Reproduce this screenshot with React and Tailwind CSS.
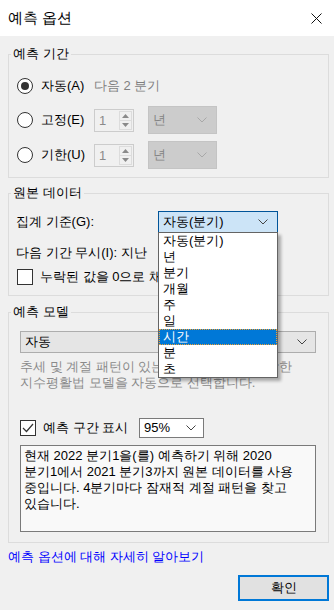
import React from "react";

const Chevron = ({ color = "#333" }) => (
  <svg width="10" height="6" viewBox="0 0 10 6" fill="none">
    <polyline points="0.5,0.5 5,5 9.5,0.5" stroke={color} strokeWidth="1" />
  </svg>
);

const Radio = ({ checked }) => (
  <span className="w-[16px] h-[16px] rounded-full border border-[#333333] bg-white flex items-center justify-center shrink-0">
    {checked && <span className="w-[8px] h-[8px] rounded-full bg-[#333333]" />}
  </span>
);

const Checkbox = ({ checked }) => (
  <span className="w-[16px] h-[16px] border border-[#333333] bg-white flex items-center justify-center shrink-0">
    {checked && (
      <svg width="12" height="10" viewBox="0 0 12 10" fill="none">
        <polyline points="1,5 4.5,8.5 11,1" stroke="#333" strokeWidth="1.2" />
      </svg>
    )}
  </span>
);

const Spinner = () => (
  <div className="w-[40px] h-[23px] border border-[#cccccc] flex">
    <span className="flex-1 pl-[4px] leading-[21px] text-[#8a8a8a]">1</span>
    <div className="w-[13px] flex flex-col my-[1px] mr-[1px]">
      <div className="flex-1 border border-[#dcdcdc] flex items-center justify-center">
        <svg width="7" height="4" viewBox="0 0 7 4"><polygon points="0,4 3.5,0 7,4" fill="#8a8a8a" /></svg>
      </div>
      <div className="flex-1 border border-[#dcdcdc] border-t-0 flex items-center justify-center">
        <svg width="7" height="4" viewBox="0 0 7 4"><polygon points="0,0 3.5,4 7,0" fill="#8a8a8a" /></svg>
      </div>
    </div>
  </div>
);

const DisabledSelect = () => (
  <div className="ml-[14px] w-[69px] h-[28px] bg-[#cccccc] border border-[#c4c4c4] flex items-center justify-between pl-[4px] pr-[9px]">
    <span className="text-[#838383]">년</span>
    <Chevron color="#a8a8a8" />
  </div>
);

const items = ["자동(분기)", "년", "분기", "개월", "주", "일", "시간", "분", "초"];

export default function App() {
  return (
    <div className="w-[334px] h-[610px] bg-[#f0f0f0] font-['Liberation_Sans',sans-serif] text-[13px] leading-[16px] text-black overflow-hidden">
      {/* title bar */}
      <div className="h-[36px] bg-white flex items-center justify-between pl-[8px] pr-[12px]">
        <span className="text-[14.5px] leading-[20px]">예측 옵션</span>
        <svg width="11" height="11" viewBox="0 0 11 11" fill="none">
          <line x1="0.5" y1="0.5" x2="10.5" y2="10.5" stroke="#111" strokeWidth="1" />
          <line x1="10.5" y1="0.5" x2="0.5" y2="10.5" stroke="#111" strokeWidth="1" />
        </svg>
      </div>

      <div className="pl-[8px] pr-[5px] pt-[10px] flex flex-col">
        {/* group 1 */}
        <fieldset className="border border-[#dcdcdc]">
          <legend className="ml-[2px] px-[2px] leading-[16px]">예측 기간</legend>
          <div className="flex flex-col pl-[8px] pt-[10px] pb-[8px]">
            <div className="h-[28px] flex items-center">
              <Radio checked />
              <span className="ml-[8px] w-[53px]">자동(A)</span>
              <span className="text-[#7f7f7f]">다음 2 분기</span>
            </div>
            <div className="h-[28px] mt-[6px] flex items-center">
              <Radio />
              <span className="ml-[8px] w-[53px]">고정(E)</span>
              <Spinner />
              <DisabledSelect />
            </div>
            <div className="h-[28px] mt-[7px] flex items-center">
              <Radio />
              <span className="ml-[8px] w-[53px]">기한(U)</span>
              <Spinner />
              <DisabledSelect />
            </div>
          </div>
        </fieldset>

        {/* group 2 */}
        <fieldset className="border border-[#dcdcdc] mt-[7px]">
          <legend className="ml-[2px] px-[2px] leading-[16px]">원본 데이터</legend>
          <div className="flex flex-col pl-[7px] pt-[10px] pb-[10px]">
            <div className="flex items-center h-[22px]">
              <span className="w-[142px]">집계 기준(G):</span>
              <div className="relative">
                <div className="w-[120px] h-[22px] bg-[#cce4f7] border border-[#005499] flex items-center justify-between pl-[4px] pr-[9px]">
                  <span>자동(분기)</span>
                  <Chevron color="#444" />
                </div>
                <div className="absolute left-0 top-[21px] z-10 w-[120px] bg-white border border-[#646464] shadow-[3px_3px_3px_rgba(0,0,0,0.3)] flex flex-col">
                  {items.map((t) =>
                    t === "시간" ? (
                      <div key={t} className="h-[16px] leading-[14px] pl-[3px] bg-[#0078d7] text-white border border-dotted border-[#f0a030]">
                        {t}
                      </div>
                    ) : (
                      <div key={t} className="h-[16px] leading-[16px] pl-[4px]">
                        {t}
                      </div>
                    )
                  )}
                </div>
              </div>
            </div>
            <div className="mt-[12px] h-[16px]">다음 기간 무시(I): 지난</div>
            <div className="mt-[8px] h-[16px] flex items-center">
              <span className="ml-[1px]"><Checkbox /></span>
              <span className="ml-[7px] whitespace-nowrap">누락된 값을 0으로 채우기</span>
            </div>
          </div>
        </fieldset>

        {/* group 3 */}
        <fieldset className="border border-[#dcdcdc] mt-[8px]">
          <legend className="ml-[2px] px-[2px] leading-[16px]">예측 모델</legend>
          <div className="flex flex-col pl-[11px] pt-[11px] pb-[10px]">
            <div className="w-[296px] h-[22px] bg-[#e5e5e5] border border-[#adadad] flex items-center justify-between pl-[4px] pr-[8px]">
              <span>자동</span>
              <Chevron color="#444" />
            </div>
            <div className="mt-[6px] text-[#8a8a8a] whitespace-nowrap">
              <div className="h-[16px]">추세 및 계절 패턴이 있는 데이터에 가장 적합한</div>
              <div className="h-[16px]">지수평활법 모델을 자동으로 선택합니다.</div>
            </div>
            <div className="mt-[27px] h-[20px] flex items-center">
              <Checkbox checked />
              <span className="ml-[7px] w-[96px]">예측 구간 표시</span>
              <div className="w-[65px] h-[20px] bg-white border border-[#7a7a7a] flex items-center justify-between pl-[4px] pr-[7px]">
                <span>95%</span>
                <Chevron color="#444" />
              </div>
            </div>
            <div className="mt-[7px] w-[296px] h-[87px] bg-[#f9f9f9] border border-[#7a7a7a] pl-[3px] pt-[2px] whitespace-nowrap">
              <div>현재 2022 분기1을(를) 예측하기 위해 2020</div>
              <div>분기1에서 2021 분기3까지 원본 데이터를 사용</div>
              <div>중입니다. 4분기마다 잠재적 계절 패턴을 찾고</div>
              <div>있습니다.</div>
            </div>
          </div>
        </fieldset>

        <div className="mt-[6px] h-[16px] text-[#0000ff]">예측 옵션에 대해 자세히 알아보기</div>

        <div className="mt-[10px] flex justify-end">
          <button className="w-[91px] h-[26px] border-2 border-[#0078d7] bg-[#e1e1e1] text-[13px] leading-[16px] flex items-center justify-center">
            확인
          </button>
        </div>
      </div>
    </div>
  );
}
